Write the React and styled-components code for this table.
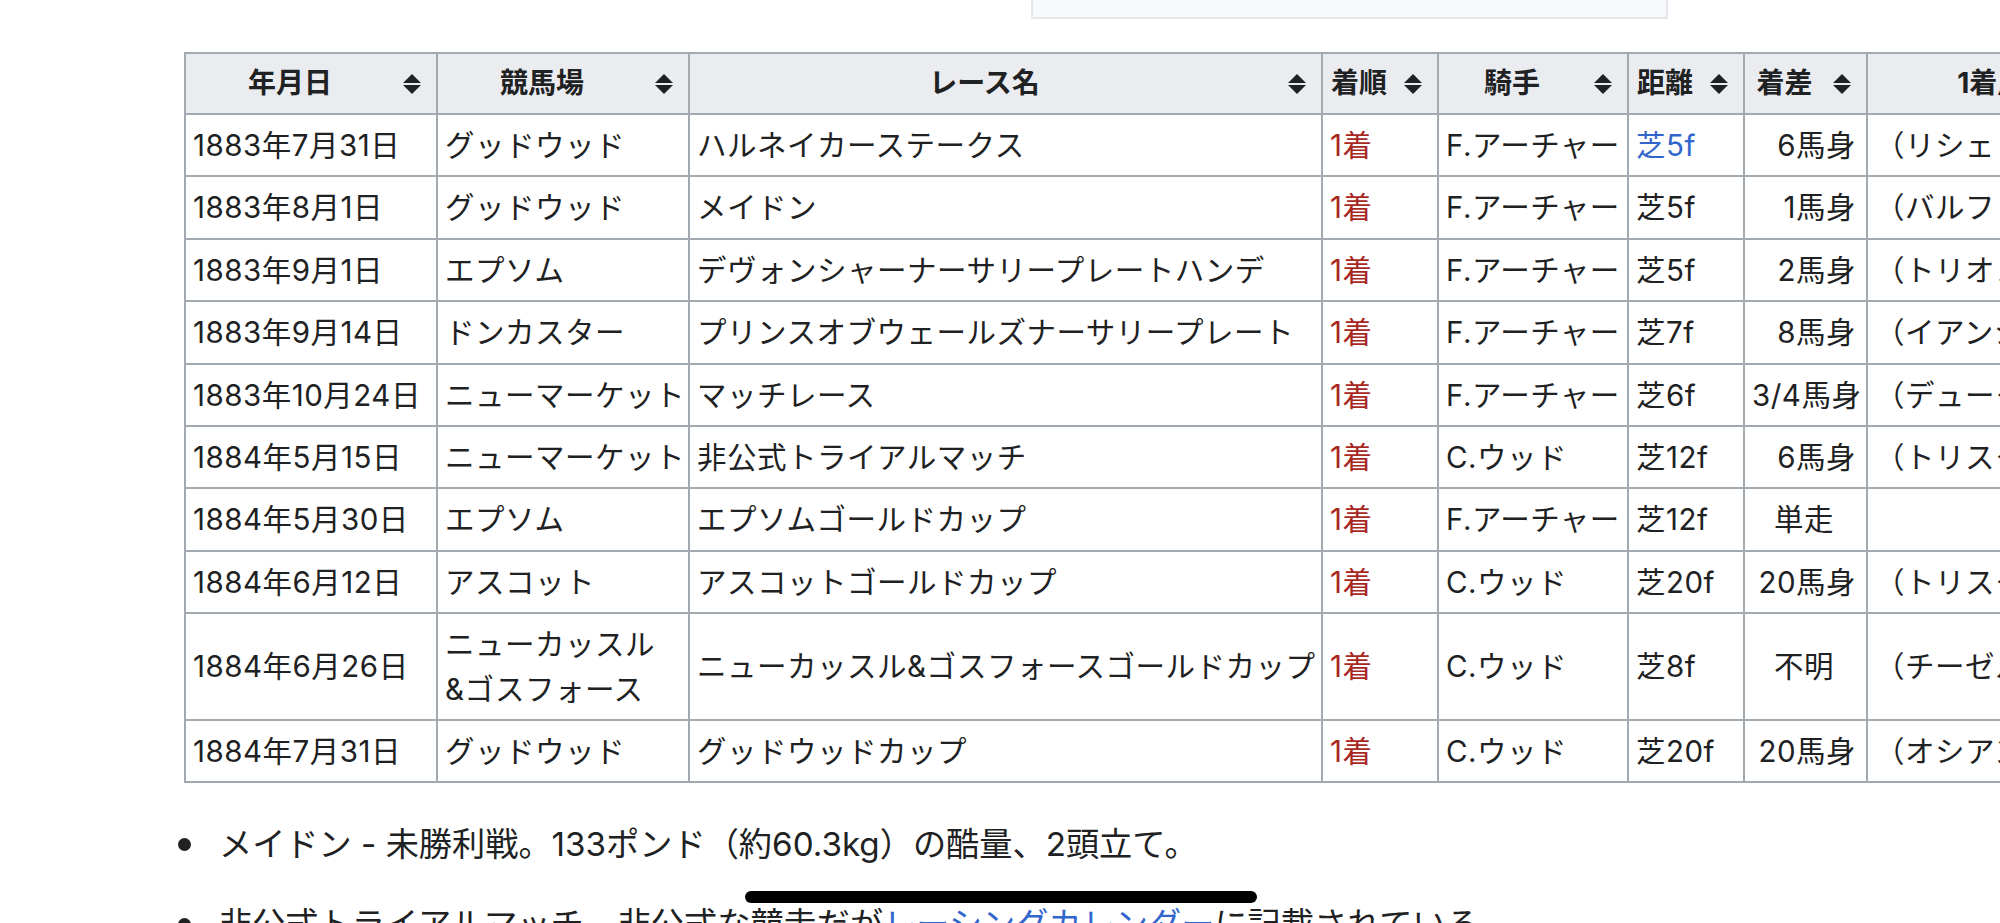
import React from 'react';
import styled, { createGlobalStyle } from 'styled-components';

const GlobalStyle = createGlobalStyle`
  html, body {
    margin: 0;
    padding: 0;
    background: #ffffff;
    overflow: hidden;
  }
  body {
    font-family: Inter, "Noto Sans CJK JP", sans-serif;
    color: #202122;
  }
`;

const Page = styled.div`
  width: 2000px;
  height: 923px;
  overflow: hidden;
`;

const TopBox = styled.div`
  margin-left: 1031px;
  width: 637px;
  height: 19px;
  box-sizing: border-box;
  background-color: #f8f9fa;
  border: 2px solid #e4e7ec;
  border-top: none;
`;

const TableScroller = styled.div`
  margin-top: 33px;
  padding-left: 184px;
  overflow: hidden;
`;

const RaceTable = styled.table`
  border-collapse: collapse;
  table-layout: fixed;
  width: ${(p) => p.width}px;
  border: 2px solid #a2a9b1;
  font-size: 29.5px;
  line-height: 44.4px;
  letter-spacing: 0.5px;
`;

const HeadCell = styled.th`
  background-color: #eaecf0;
  border: 2px solid #a2a9b1;
  padding: 7px 15px 7px 8px;
  font-size: 28px;
  line-height: 45px;
  font-weight: 700;
  letter-spacing: 0;
  white-space: nowrap;
`;

const HeadInner = styled.div`
  display: flex;
  align-items: center;
`;

const HeadLabel = styled.span`
  flex: 1;
  text-align: center;
`;

const SortIcon = styled.svg`
  flex: none;
  margin-left: 17px;
  width: 18px;
  height: 20px;
`;

const Cell = styled.td`
  border: 2px solid #a2a9b1;
  padding: 8px 10px 8px 7px;
  text-align: ${(p) => p.align || 'left'};
  white-space: ${(p) => (p.wrap ? 'normal' : 'nowrap')};
  overflow: hidden;
  vertical-align: middle;
`;

const Place = styled.span`
  color: #a8281f;
`;

const Link = styled.a`
  color: #3366cc;
  text-decoration: none;
`;

const Notes = styled.ul`
  margin: 37px 0 0 0;
  padding: 0 0 0 219px;
  font-size: 33.2px;
  line-height: 48px;
  list-style: none;
`;

const Note = styled.li`
  position: relative;
  margin-bottom: 32px;
  white-space: nowrap;

  &::before {
    content: '';
    position: absolute;
    left: -41px;
    top: 18px;
    width: 13px;
    height: 13px;
    border-radius: 50%;
    background-color: #202122;
  }
`;

const HomeBar = styled.div`
  position: fixed;
  left: 50%;
  bottom: 20px;
  width: 512px;
  height: 12px;
  margin-left: -255px;
  border-radius: 6px;
  background-color: #000000;
`;

const columns = [
  { label: '年月日', width: 252 },
  { label: '競馬場', width: 252 },
  { label: 'レース名', width: 633 },
  { label: '着順', width: 116 },
  { label: '騎手', width: 190 },
  { label: '距離', width: 116 },
  { label: '着差', width: 123 },
  { label: '1着馬（2着馬）', width: 420 },
];

const races = [
  ['1883年7月31日', 'グッドウッド', 'ハルネイカーステークス', 'F.アーチャー', '芝5f', '6馬身', '（リシェリュー）', true],
  ['1883年8月1日', 'グッドウッド', 'メイドン', 'F.アーチャー', '芝5f', '1馬身', '（バルフォア）'],
  ['1883年9月1日', 'エプソム', 'デヴォンシャーナーサリープレートハンデ', 'F.アーチャー', '芝5f', '2馬身', '（トリオンフ）'],
  ['1883年9月14日', 'ドンカスター', 'プリンスオブウェールズナーサリープレート', 'F.アーチャー', '芝7f', '8馬身', '（イアンシア）'],
  ['1883年10月24日', 'ニューマーケット', 'マッチレース', 'F.アーチャー', '芝6f', '3/4馬身', '（デューク）'],
  ['1884年5月15日', 'ニューマーケット', '非公式トライアルマッチ', 'C.ウッド', '芝12f', '6馬身', '（トリスタン）'],
  ['1884年5月30日', 'エプソム', 'エプソムゴールドカップ', 'F.アーチャー', '芝12f', '単走', ''],
  ['1884年6月12日', 'アスコット', 'アスコットゴールドカップ', 'C.ウッド', '芝20f', '20馬身', '（トリスタン）'],
  ['1884年6月26日', 'ニューカッスル\n&ゴスフォース', 'ニューカッスル&ゴスフォースゴールドカップ', 'C.ウッド', '芝8f', '不明', '（チーゼルハースト）'],
  ['1884年7月31日', 'グッドウッド', 'グッドウッドカップ', 'C.ウッド', '芝20f', '20馬身', '（オシアン）'],
];

const SortArrows = () => (
  <SortIcon viewBox="0 0 18 20">
    <polygon points="0,9 9,0 18,9" fill="#202122" />
    <polygon points="0,11 18,11 9,20" fill="#202122" />
  </SortIcon>
);

const renderCourse = (course) => {
  const parts = course.split('\n');
  if (parts.length === 1) return course;
  return (
    <>
      {parts[0]}
      <br />
      {parts[1]}
    </>
  );
};

const App = () => {
  const tableWidth = columns.reduce((sum, c) => sum + c.width, 0);

  return (
    <Page>
      <GlobalStyle />
      <TopBox />
      <TableScroller>
        <RaceTable width={tableWidth}>
          <colgroup>
            {columns.map((c) => (
              <col key={c.label} style={{ width: c.width }} />
            ))}
          </colgroup>
          <thead>
            <tr>
              {columns.map((c) => (
                <HeadCell key={c.label}>
                  <HeadInner>
                    <HeadLabel>{c.label}</HeadLabel>
                    <SortArrows />
                  </HeadInner>
                </HeadCell>
              ))}
            </tr>
          </thead>
          <tbody>
            {races.map(([date, course, race, jockey, distance, margin, runnerUp, linked]) => {
              const centered = margin === '単走' || margin === '不明';
              return (
                <tr key={date}>
                  <Cell>{date}</Cell>
                  <Cell wrap={course.includes('\n')}>{renderCourse(course)}</Cell>
                  <Cell>{race}</Cell>
                  <Cell><Place>1着</Place></Cell>
                  <Cell>{jockey}</Cell>
                  <Cell>{linked ? <Link href="#">{distance}</Link> : distance}</Cell>
                  <Cell align={centered ? 'center' : 'right'}>{margin}</Cell>
                  <Cell>{runnerUp}</Cell>
                </tr>
              );
            })}
          </tbody>
        </RaceTable>
      </TableScroller>
      <Notes>
        <Note>メイドン - 未勝利戦。133ポンド（約60.3kg）の酷量、2頭立て。</Note>
        <Note>
          非公式トライアルマッチ - 非公式な競走だが<Link href="#">レーシングカレンダー</Link>に記載されている。
        </Note>
      </Notes>
      <HomeBar />
    </Page>
  );
};

export default App;
